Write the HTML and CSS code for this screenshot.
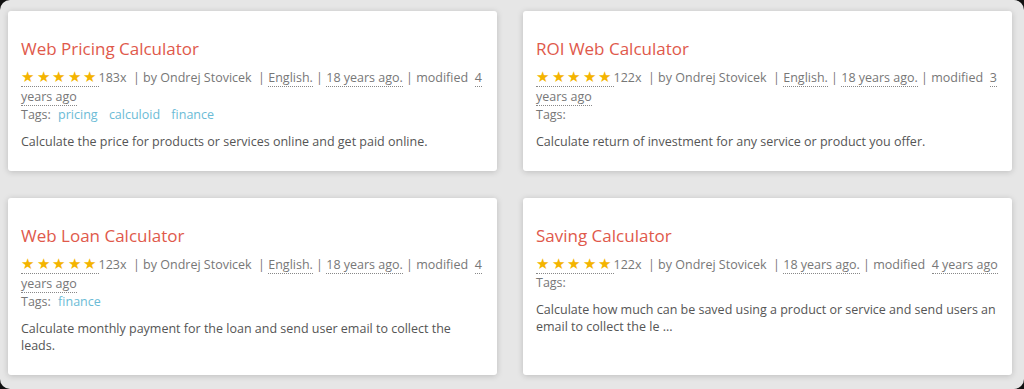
FILE: index.html
```html
<!DOCTYPE html>
<html lang="en">
  <head>
    <meta charset="UTF-8" />
    <meta name="viewport" content="width=device-width, initial-scale=1.0" />
    <title>Calculators</title>
    <link rel="stylesheet" href="styles.css">
  </head>
  <body>
    <div class="page">
      <div class="calc-list">
        <div class="calc-item">
          <h2 class="calc-title">Web Pricing Calculator</h2>
          <div class="calc-meta">
            <abbr class="stars" title="5 of 5">★★★★★</abbr>183x &nbsp;| by Ondrej Stovicek &nbsp;| <abbr title="Language">English.</abbr> | <abbr title="Created">18 years ago.</abbr> | modified &nbsp;<abbr title="Modified">4 years ago</abbr>
          </div>
          <div class="calc-tags">
            Tags: <a href="#">pricing</a> <a href="#">calculoid</a> <a href="#">finance</a>
          </div>
          <p class="calc-desc">Calculate the price for products or services online and get paid online.</p>
        </div>

        <div class="calc-item">
          <h2 class="calc-title">ROI Web Calculator</h2>
          <div class="calc-meta">
            <abbr class="stars" title="5 of 5">★★★★★</abbr>122x &nbsp;| by Ondrej Stovicek &nbsp;| <abbr title="Language">English.</abbr> | <abbr title="Created">18 years ago.</abbr> | modified &nbsp;<abbr title="Modified">3 years ago</abbr>
          </div>
          <div class="calc-tags">Tags:</div>
          <p class="calc-desc">Calculate return of investment for any service or product you offer.</p>
        </div>

        <div class="calc-item">
          <h2 class="calc-title">Web Loan Calculator</h2>
          <div class="calc-meta">
            <abbr class="stars" title="5 of 5">★★★★★</abbr>123x &nbsp;| by Ondrej Stovicek &nbsp;| <abbr title="Language">English.</abbr> | <abbr title="Created">18 years ago.</abbr> | modified &nbsp;<abbr title="Modified">4 years ago</abbr>
          </div>
          <div class="calc-tags">
            Tags: <a href="#">finance</a>
          </div>
          <p class="calc-desc">Calculate monthly payment for the loan and send user email to collect the leads.</p>
        </div>

        <div class="calc-item">
          <h2 class="calc-title">Saving Calculator</h2>
          <div class="calc-meta">
            <abbr class="stars" title="5 of 5">★★★★★</abbr>122x &nbsp;| by Ondrej Stovicek &nbsp;| <abbr title="Created">18 years ago.</abbr> | modified &nbsp;<abbr title="Modified">4 years ago</abbr>
          </div>
          <div class="calc-tags">Tags:</div>
          <p class="calc-desc">Calculate how much can be saved using a product or service and send users an email to collect the le ...</p>
        </div>
      </div>
    </div>
  </body>
</html>
```

FILE: styles.css
```css
html,
body {
  margin: 0;
  height: 100%;
  background: #111;
}
body {
  font-family: "Open Sans", Arial, sans-serif;
  color: #666;
}
.page {
  height: 100%;
  box-sizing: border-box;
  background: #e6e6e6;
  border-radius: 10px;
  padding: 11px 12px 0 8px;
}
.calc-list {
  display: grid;
  grid-template-columns: 1fr 1fr;
  column-gap: 26px;
  row-gap: 27px;
}
.calc-item {
  background: white;
  border-radius: 3px;
  box-shadow: 0 1px 6px rgba(0, 0, 0, 0.18);
  padding: 26px 13px 21px 13px;
}
.calc-title {
  margin: 0 0 7px;
  font-size: 17px;
  font-weight: 400;
  line-height: 24px;
  color: #e0594b;
}
.calc-meta {
  font-size: 12.5px;
  line-height: 19px;
  color: #777;
}
.calc-meta abbr {
  text-decoration: none;
  border-bottom: 1px dotted #888;
}
.stars {
  color: #f4b400;
  font-size: 15px;
  line-height: 1;
  letter-spacing: 2.5px;
}
.calc-tags {
  font-size: 12.5px;
  line-height: 18px;
  color: #777;
}
.calc-tags a {
  color: #6bbbd6;
  text-decoration: none;
  margin-left: 4px;
  margin-right: 4px;
}
.calc-desc {
  margin: 9px 0 0;
  font-size: 12.5px;
  line-height: 17px;
  color: #555;
}
```
